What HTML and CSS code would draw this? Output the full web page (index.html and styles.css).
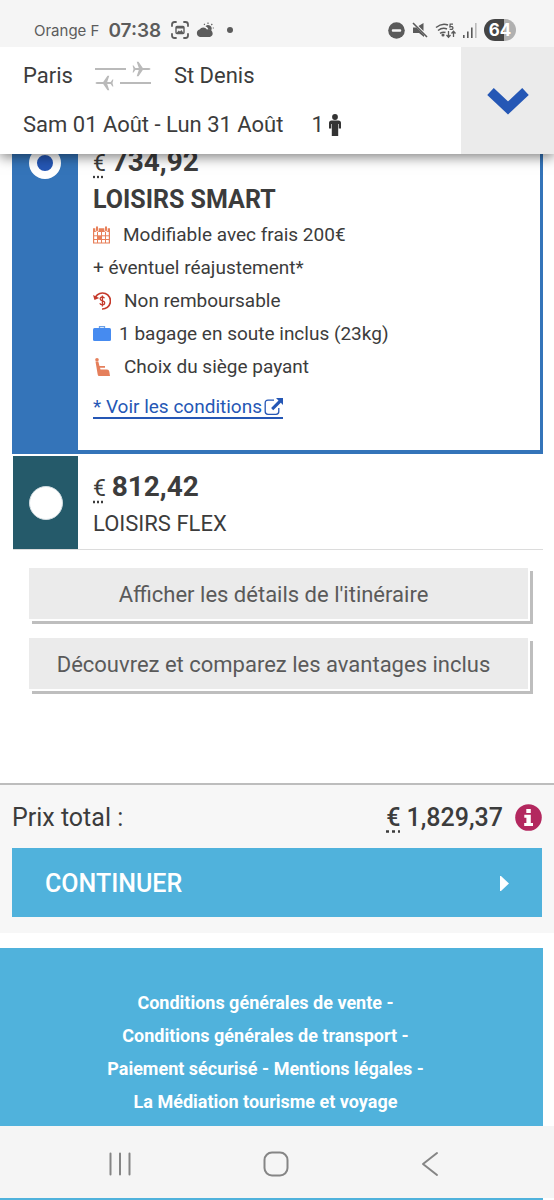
FILE: index.html
```html
<!DOCTYPE html>
<html lang="fr">
<head>
<meta charset="utf-8">
<meta name="viewport" content="width=device-width, initial-scale=1">
<title>Paris - St Denis</title>
<link rel="stylesheet" href="styles.css">
</head>
<body>
<div class="screen">
  <div class="status">
    <div class="status-left">
      <span class="carrier">Orange F</span>
      <span class="clock">07:38</span>
      <svg class="ic-shot" width="18" height="18" viewBox="0 0 18 18" fill="none" stroke="#5c5c5c" stroke-width="1.800" stroke-linecap="round"><path d="M1 5V3.500Q1 1 3.500 1H5M13 1h1.500Q17 1 17 3.500V5M17 13v1.500Q17 17 14.500 17H13M5 17H3.500Q1 17 1 14.500V13"/><rect x="5" y="5.500" width="8" height="7" rx="1" stroke-width="1.400"/><path d="M5 5.500h8v2H5zM5.500 12l2.300-2.500 1.200 1 1.500-1.500 2 3z" fill="#5c5c5c" stroke="none"/></svg>
      <svg class="ic-cloud" width="18" height="16" viewBox="0 0 18 16" fill="#5c5c5c"><path d="M4 15a3.900 3.900 0 0 1-.5-7.500A4.500 4.500 0 0 1 11 7.500 3.800 3.800 0 0 1 14 15z"/><path d="M9.500 4.200a3.500 3.500 0 0 1 5.500 4.300 5 5 0 0 0-2.700-1.600A5.500 5.500 0 0 0 9.500 4.200z"/><path d="M12 2V.5M15.300 3l1-1M16.800 6h1M8.800 2.800L8 1.800" stroke="#5c5c5c" stroke-width="1.100"/></svg>
      <span class="dot"></span>
    </div>
    <div class="status-right">
      <svg width="17" height="17" viewBox="0 0 17 17"><circle cx="8.500" cy="8.500" r="8.300" fill="#5a5a5a"/><rect x="3.800" y="7.300" width="9.400" height="2.400" rx="1" fill="#f5f5f5"/></svg>
      <svg width="16" height="16" viewBox="0 0 16 16" fill="#5a5a5a"><path d="M1 5.500h3.500L12 13v2l-5-4H1zM11.500 1v8L6.500 4z"/><path d="M1 1l14 14" stroke="#5a5a5a" stroke-width="1.600"/></svg>
      <svg width="21" height="17" viewBox="0 0 21 17" fill="none" stroke="#5a5a5a" stroke-width="1.500"><path d="M1 5.500Q7 .5 13 3M3 8.500Q7.500 5 12 7M5 11.300Q8 9.500 10.500 10.500"/><circle cx="8" cy="13" r=".8" fill="#5a5a5a"/><path d="M18 2.200h-2.800l-.3 2.600q3-.8 3 1.200 0 2-3.200 1.200" stroke-width="1.300"/><path d="M13.500 9v6M11.500 13l2 2.200 2-2.200M18.500 15V9.500M16.500 11.500l2-2.200 2 2.200" stroke-width="1.300"/></svg>
      <svg width="14" height="15" viewBox="0 0 14 15" fill="#5a5a5a"><rect y="12" width="1.600" height="3"/><rect x="4" y="8.500" width="1.600" height="6.500"/><rect x="8" y="4.500" width="1.600" height="10.500"/><rect x="12" width="1.600" height="15" fill="#bbb"/></svg>
      <span class="battery">64</span>
    </div>
  </div>

  <header class="trip">
    <div class="trip-info">
      <div class="trip-row">
        <span>Paris</span>
        <svg class="planes" width="56" height="30" viewBox="0 0 56 30" fill="#bababa"><rect y="7" width="31" height="2"/><rect x="25" y="21" width="31" height="2"/><path d="M55.500 8q0-1-2-1h-5.700L43.500.8h-1.800L43.800 7h-3.500l-1.700-2.500h-1L38.500 8l-.9 3.500h1L40.300 9h3.500l-2.100 6.200h1.800L47.800 9h5.700q2 0 2-1z"/><path transform="rotate(180 28 15)" d="M55.500 8q0-1-2-1h-5.700L43.500.8h-1.800L43.800 7h-3.500l-1.700-2.500h-1L38.500 8l-.9 3.500h1L40.300 9h3.500l-2.100 6.200h1.800L47.800 9h5.700q2 0 2-1z"/></svg>
        <span>St Denis</span>
      </div>
      <div class="trip-row">
        <span>Sam 01 Août - Lun 31 Août</span>
        <span class="pax">1<svg width="12" height="22" viewBox="0 0 12 22" fill="#333"><circle cx="6" cy="3" r="2.900"/><path d="M2.500 6.500h7Q12 6.500 12 9v5.500h-2.200V10H9.200v12H2.800V10h-.6v4.500H0V9q0-2.500 2.500-2.500z"/></svg></span>
      </div>
    </div>
    <button class="expand" type="button" aria-label="Afficher le voyage"><svg width="42" height="28" viewBox="0 0 42 28"><path d="M3.500 4.500L21 21 38.500 4.500" fill="none" stroke="#2557b5" stroke-width="9.500" stroke-linejoin="miter"/></svg></button>
  </header>

  <main>
    <div class="fares">
      <div class="fare selected">
        <div class="pick"><input type="radio" name="fare" id="smart" checked></div>
        <div class="fare-body">
          <label for="smart"><span class="price"><abbr title="Euro">€</abbr> <b>734,92</b></span><span class="name">LOISIRS SMART</span></label>
          <ul class="perks">
            <li><svg class="wide" width="17" height="18" viewBox="0 0 17 18"><path d="M.6 3h15.800v14H.6z" fill="none" stroke="#e8805a" stroke-width="1.200"/><path d="M0 2.500h17V6H0z" fill="#e8805a"/><path d="M4.500 6v11M8.500 6v11M12.500 6v11M0 9.800h17M0 13.500h17" stroke="#e8805a"/><rect x="4.500" y="10" width="4" height="3.500" fill="#e8805a"/><path d="M4 1.200v3M13 1.200v3" stroke="#fff" stroke-width="3.400" stroke-linecap="round"/><path d="M4 1.200v3M13 1.200v3" stroke="#e8805a" stroke-width="2" stroke-linecap="round"/></svg>Modifiable avec frais 200€</li>
            <li>+ éventuel réajustement*</li>
            <li><svg class="wide" width="18" height="18" viewBox="0 0 18 18" fill="none" stroke="#c53a2b"><path d="M2.500 5A8 8 0 1 1 9 17" stroke-width="1.700"/><path d="M0 3l1.500 5 4.700-2z" fill="#c53a2b" stroke="none"/><path d="M11.500 6.300Q10.800 5 9.300 5 7 5.200 7.200 7q.2 1.300 2.200 1.900 2.400.6 2.300 2.200-.1 1.700-2.300 1.800-2 0-2.600-1.600M9.400 3.500v11" stroke-width="1.300"/></svg>Non remboursable</li>
            <li><svg class="bag" width="18" height="16" viewBox="0 0 18 16"><path d="M6.500 3V.700h5V3" fill="none" stroke="#6ba1e8" stroke-width="1.300"/><rect y="2" width="18" height="13" rx="1.500" fill="#468bf0"/></svg>1 bagage en soute inclus (23kg)</li>
            <li><svg class="wide" width="18" height="18" viewBox="0 0 18 18" fill="#e57f5b"><circle cx="4" cy="1.800" r="1.800"/><path d="M2.500 3.500h2.800L6.500 8H12v1.800H7l.5 1.700H14q2 0 2.300 2L17 18H6q-1 0-1.300-1.500z"/></svg>Choix du siège payant</li>
          </ul>
          <a class="terms" href="#">* Voir les conditions <svg width="19" height="18" viewBox="0 0 19 18"><path d="M10 2.200H4Q1.200 2.200 1.200 5v8.500q0 2.800 2.800 2.800h8q2.800 0 2.800-2.800V10" fill="none" stroke="#2557b5" stroke-width="1.300"/><path d="M12 0h7v7l-2.200-2.200-7.600 7.400-2.100-2.100 7.400-7.600z" fill="#2557b5"/></svg></a>
        </div>
      </div>
      <div class="fare other">
        <div class="pick"><input type="radio" name="fare" id="flex"></div>
        <div class="fare-body">
          <label for="flex"><span class="price"><abbr title="Euro">€</abbr> <b>812,42</b></span><span class="name">LOISIRS FLEX</span></label>
        </div>
      </div>
    </div>
    <div class="actions">
      <button type="button">Afficher les détails de l'itinéraire</button>
      <button type="button">Découvrez et comparez les avantages inclus</button>
    </div>
  </main>

  <section class="total">
    <div class="total-row">
      <span>Prix total :</span>
      <span class="amount"><abbr title="Euro">€</abbr> 1,829,37</span>
      <svg width="27" height="27" viewBox="0 0 27 27"><circle cx="13.500" cy="13.500" r="13.300" fill="#b3285f"/><path d="M11.300 5h4.500v4h-4.500zM9.300 10.800h6.500v8.200h2.200v3H9.200v-3h2.200v-5.200H9.300z" fill="#fff"/></svg>
    </div>
    <button class="continue" type="button">CONTINUER<svg width="9" height="15" viewBox="0 0 9 15"><path d="M0 0h1l8 7.500L1 15H0z" fill="#fff"/></svg></button>
  </section>

  <footer class="legal">
    <p><a href="#">Conditions générales de vente</a> -</p>
    <p><a href="#">Conditions générales de transport</a> -</p>
    <p><a href="#">Paiement sécurisé</a> - <a href="#">Mentions légales</a> -</p>
    <p><a href="#">La Médiation tourisme et voyage</a></p>
  </footer>

  <nav class="system">
    <button type="button" aria-label="Applications récentes"><svg width="24" height="24" viewBox="0 0 24 24" stroke="#858585" stroke-width="2" stroke-linecap="round"><path d="M2.500 1.500v21M12 1.500v21M21.500 1.500v21"/></svg></button>
    <button type="button" aria-label="Accueil"><svg width="26" height="26" viewBox="0 0 26 26"><rect x="1.500" y="1.500" width="23" height="23" rx="7.500" fill="none" stroke="#858585" stroke-width="2"/></svg></button>
    <button type="button" aria-label="Retour"><svg width="20" height="26" viewBox="3 0 20 26" fill="none" stroke="#858585" stroke-width="2" stroke-linecap="round" stroke-linejoin="round"><path d="M20 2L6 13l14 11"/></svg></button>
  </nav>
  <div class="edge"></div>
</div>
</body>
</html>
```
FILE: styles.css
```css
* { box-sizing: border-box; }
body {
  margin: 0;
  background: #fff;
  color: #3c3c3c;
  font-family: Roboto, "Liberation Sans", sans-serif;
}
button { border: 0; padding: 0; font: inherit; color: inherit; }
svg { display: block; flex: none; }
abbr { text-decoration: underline dotted; text-underline-offset: 5px; }
.screen { display: flex; flex-direction: column; min-height: 100vh; }

.status {
  position: relative;
  z-index: 2;
  display: flex;
  justify-content: space-between;
  align-items: center;
  height: 47px;
  padding: 13px 38px 0 34px;
  background: #f5f5f5;
  color: #5c5c5c;
  font-family: Inter, Roboto, sans-serif;
}
.status-left, .status-right { display: flex; align-items: center; }
.carrier { font-size: 15px; }
.clock { margin-left: 9px; font-size: 19px; font-weight: 600; }
.ic-shot { margin-left: 10px; }
.ic-cloud { margin-left: 7px; }
.dot { width: 6px; height: 6px; margin-left: 13px; border-radius: 50%; background: #5c5c5c; }
.status-right { gap: 7px; }
.battery {
  width: 32px;
  border-radius: 11px;
  background: linear-gradient(90deg, #444 64%, #b0b0b0 64%);
  color: #fff;
  font-size: 17px;
  font-weight: 700;
  line-height: 22px;
  text-align: center;
}

.trip {
  position: relative;
  z-index: 1;
  display: flex;
  background: #fff;
  box-shadow: 0 3px 12px rgba(0, 0, 0, .5);
  font-size: 22px;
}
.trip-info { flex: 1; padding: 4px 0 5px 23px; }
.trip-row { display: flex; align-items: center; height: 49px; }
.planes { margin: 0 23px 0 22px; }
.pax { display: flex; align-items: center; gap: 5px; margin-left: 28px; }
.expand { display: flex; align-items: center; justify-content: center; width: 93px; background: #ebebeb; }

.fares { margin: -14px 11px 0 12px; }
.fare { display: flex; }
.pick { display: flex; justify-content: center; flex: none; width: 66px; }
.pick input {
  appearance: none;
  width: 34px;
  height: 34px;
  margin: 0;
  border: 1px solid #d0dbe0;
  border-radius: 50%;
  background: #fff;
}
.pick input:checked {
  width: 32px;
  height: 32px;
  margin-top: 7px;
  border: 8px solid #fff;
  background: #2557b5;
}
.selected { border: solid #3474b9; border-width: 0 3px 4px 0; }
.selected .pick { background: #3474b9; margin-bottom: -4px; }
.fare-body { flex: 1; padding: 4px 0 31px 15px; }
.price, .name { display: block; line-height: 36px; }
.price { font-size: 23px; }
.price b { font-size: 28px; }
.name { font-size: 22px; }
.selected .name { font-size: 25px; font-weight: 700; }
.perks { margin: 0; padding: 0; list-style: none; font-size: 19px; line-height: 33px; }
.perks li { display: flex; align-items: center; }
.wide { margin-right: 13px; }
.bag { margin-right: 8px; }
.terms {
  display: inline-flex;
  align-items: center;
  gap: 2px;
  margin-top: 14px;
  border-bottom: 2px solid #2557b5;
  color: #2557b5;
  font-size: 19px;
  line-height: 20px;
  text-decoration: none;
}
.other { margin: 2px 0 0 1px; border-bottom: 1px solid #dcdcdc; }
.other .pick { align-items: center; width: 65px; background: #255a6a; }
.other .fare-body { padding: 13px 0 8px 15px; }
.other .name { line-height: 34px; }

.actions { display: grid; gap: 19px; margin: 18px 26px 94px 29px; }
.actions button {
  height: 51px;
  padding: 2px 10px 0 0;
  background: #ebebeb;
  box-shadow: 1px 1px 0 1px #fff, 4px 4px 0 1px #bebebe;
  color: #5a5a5a;
  font-size: 22px;
}

.total { padding: 13px 12px 16px; border-top: 2px solid #bdbdbd; background: #f7f7f7; }
.total-row { display: flex; align-items: center; height: 38px; font-size: 25px; }
.amount { margin: 0 12px 0 auto; font-weight: 500; }
.continue {
  display: flex;
  align-items: center;
  justify-content: space-between;
  width: 100%;
  height: 69px;
  margin-top: 12px;
  padding: 2px 33px 0;
  background: #50b2dc;
  color: #fff;
  font-size: 25px;
  font-weight: 500;
}

.legal {
  flex: 1;
  margin: 15px 11px 0 0;
  padding: 38px 12px 8px 0;
  background: #50b2dc;
  color: #fff;
  font-size: 18px;
  font-weight: 700;
  line-height: 33px;
  text-align: center;
}
.legal p { margin: 0; }
.legal a { color: inherit; text-decoration: none; }

.system { display: flex; justify-content: space-between; padding: 0 114px 0 108px; height: 72px; background: #f5f5f5; }
.system button { display: flex; align-items: center; justify-content: center; background: none; padding-top: 4px; }
.edge { height: 2px; margin-right: 11px; background: #50b2dc; }
```
